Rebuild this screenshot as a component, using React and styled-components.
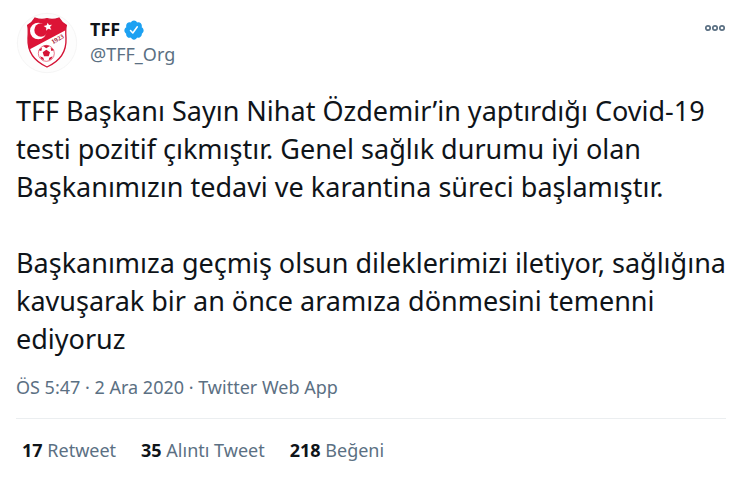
import React from "react";
import styled, { createGlobalStyle } from "styled-components";

const Global = createGlobalStyle`
  body {
    margin: 0;
    background: #fff;
    color: #0f1419;
    font-family: "Noto Sans", "Open Sans", sans-serif;
  }
`;

const Tweet = styled.article`
  padding: 12px 14px 12px 16px;
`;

const Header = styled.header`
  display: flex;
  align-items: flex-start;
  gap: 12px;
`;

const Avatar = styled.svg`
  flex: none;
  width: 62px;
  height: 62px;
`;

const Author = styled.div`
  flex: 1;
  padding-top: 5px;
  font-size: 18px;
  line-height: 25px;
`;

const Name = styled.a`
  display: flex;
  align-items: center;
  gap: 3px;
  color: #0f1419;
  font-weight: 700;
  text-decoration: none;
`;

const Handle = styled.a`
  display: block;
  color: #5b7083;
  text-decoration: none;
`;

const Badge = styled.svg`
  width: 22px;
  height: 22px;
`;

const MoreButton = styled.button`
  display: flex;
  padding: 12px 0 0;
  border: 0;
  background: none;
  color: #5b7083;
  cursor: pointer;
`;

const Body = styled.p`
  margin: 18px 0 0;
  font-size: 27px;
  line-height: 38px;
  white-space: pre-line;
`;

const Meta = styled.div`
  margin-top: 16px;
  padding-bottom: 18px;
  border-bottom: 1px solid #ebeef0;
  color: #5b7083;
  font-size: 18px;
  line-height: 26px;
`;

const MetaLink = styled.a`
  color: inherit;
  text-decoration: none;
`;

const Stats = styled.div`
  display: flex;
  gap: 25px;
  padding: 18px 6px;
  font-size: 18px;
  line-height: 26px;
`;

const Stat = styled.a`
  color: #5b7083;
  text-decoration: none;

  strong {
    color: #0f1419;
    font-weight: 700;
  }
`;

const text = `TFF Başkanı Sayın Nihat Özdemir’in yaptırdığı Covid-19 testi pozitif çıkmıştır. Genel sağlık durumu iyi olan Başkanımızın tedavi ve karantina süreci başlamıştır.

Başkanımıza geçmiş olsun dileklerimizi iletiyor, sağlığına kavuşarak bir an önce aramıza dönmesini temenni ediyoruz`;

const stats = [
  ["17", "Retweet"],
  ["35", "Alıntı Tweet"],
  ["218", "Beğeni"],
];

const shield = "M54 15Q72 22 90 17Q108 22 126 15Q134 29 148 37Q145 48 147 76C149 120 126 146 90 162C54 146 31 120 33 76Q35 48 32 37Q46 29 54 15Z";

function Crest() {
  return (
    <Avatar viewBox="-3 -3 186 186" role="img" aria-label="TFF">
      <defs>
        <clipPath id="shield"><path d={shield} /></clipPath>
      </defs>
      <circle cx="90" cy="90" r="89" fill="#fdfdfd" stroke="#f0f0f0" strokeWidth="2" />
      <g clipPath="url(#shield)">
        <path fill="#fff" d="M0 0H180V180H0Z" />
        <path fill="#dc1436" d="M0 0H180V34L30 113L0 130Z" />
      </g>
      <path d={shield} fill="none" stroke="#d41335" strokeWidth="4" />
      <circle cx="64" cy="54" r="25" fill="#fff" />
      <circle cx="72" cy="51" r="20" fill="#dc1436" />
      <path fill="#fff" d="M92 29l4 7 9-1-6 7 4 8-9-3-7 6 1-9-8-5 9-2z" />
      <text x="125" y="84" transform="rotate(-30 125 84)" textAnchor="middle" fontFamily="Liberation Serif, serif" fontWeight="700" fontSize="20" fill="#a51c38">1923</text>
      <circle cx="88" cy="121" r="24" fill="#fff" stroke="#dc3450" strokeWidth="2" />
      <g fill="#d41335">
        <path d="M88 110l11 8-4 12H81l-4-12z" />
        <path d="M78 99q10-4 20 0l-10 7z" />
        <path d="M111 112l-8 2-2-10q8 3 10 8z" />
        <path d="M65 112l8 2 2-10q-8 3-10 8z" />
        <path d="M97 134l10-4q-2 9-12 12z" />
        <path d="M79 134l-10-4q2 9 12 12z" />
      </g>
    </Avatar>
  );
}

export default function App() {
  return (
    <>
      <Global />
      <Tweet>
        <Header>
          <Crest />
          <Author>
            <Name href="#profile">
              TFF
              <Badge viewBox="0 0 24 24" role="img" aria-label="Onaylanmış hesap">
                <path fill="#1da1f2" d="M22.5 12.5c0-1.58-.875-2.95-2.148-3.6.154-.435.238-.905.238-1.4 0-2.21-1.71-3.998-3.818-3.998-.47 0-.92.084-1.336.25C14.818 2.415 13.51 1.5 12 1.5s-2.816.917-3.437 2.25c-.415-.165-.866-.25-1.336-.25-2.11 0-3.818 1.79-3.818 4 0 .494.083.964.237 1.4-1.272.65-2.147 2.018-2.147 3.6 0 1.495.782 2.798 1.942 3.486-.02.17-.032.34-.032.514 0 2.21 1.708 4 3.818 4 .47 0 .92-.086 1.335-.25.62 1.334 1.926 2.25 3.437 2.25 1.512 0 2.818-.916 3.437-2.25.415.163.865.248 1.336.248 2.11 0 3.818-1.79 3.818-4 0-.174-.012-.344-.033-.513 1.158-.687 1.943-1.99 1.943-3.484z" />
                <path fill="none" stroke="#fff" strokeWidth="1.7" strokeLinecap="round" strokeLinejoin="round" d="M8.2 12.6l2.5 2.6 4.9-6.7" />
              </Badge>
            </Name>
            <Handle href="#profile">@TFF_Org</Handle>
          </Author>
          <MoreButton type="button" aria-label="Daha fazla">
            <svg width="22" height="8" viewBox="0 0 22 8" fill="none" stroke="currentColor" strokeWidth="1.7">
              <circle cx="4" cy="4" r="2.2" />
              <circle cx="11" cy="4" r="2.2" />
              <circle cx="18" cy="4" r="2.2" />
            </svg>
          </MoreButton>
        </Header>
        <Body>{text}</Body>
        <Meta>
          <MetaLink href="#status">ÖS 5:47 · 2 Ara 2020</MetaLink> · <MetaLink href="#source">Twitter Web App</MetaLink>
        </Meta>
        <Stats>
          {stats.map(([count, label]) => (
            <Stat key={label} href="#stats"><strong>{count}</strong> {label}</Stat>
          ))}
        </Stats>
      </Tweet>
    </>
  );
}
